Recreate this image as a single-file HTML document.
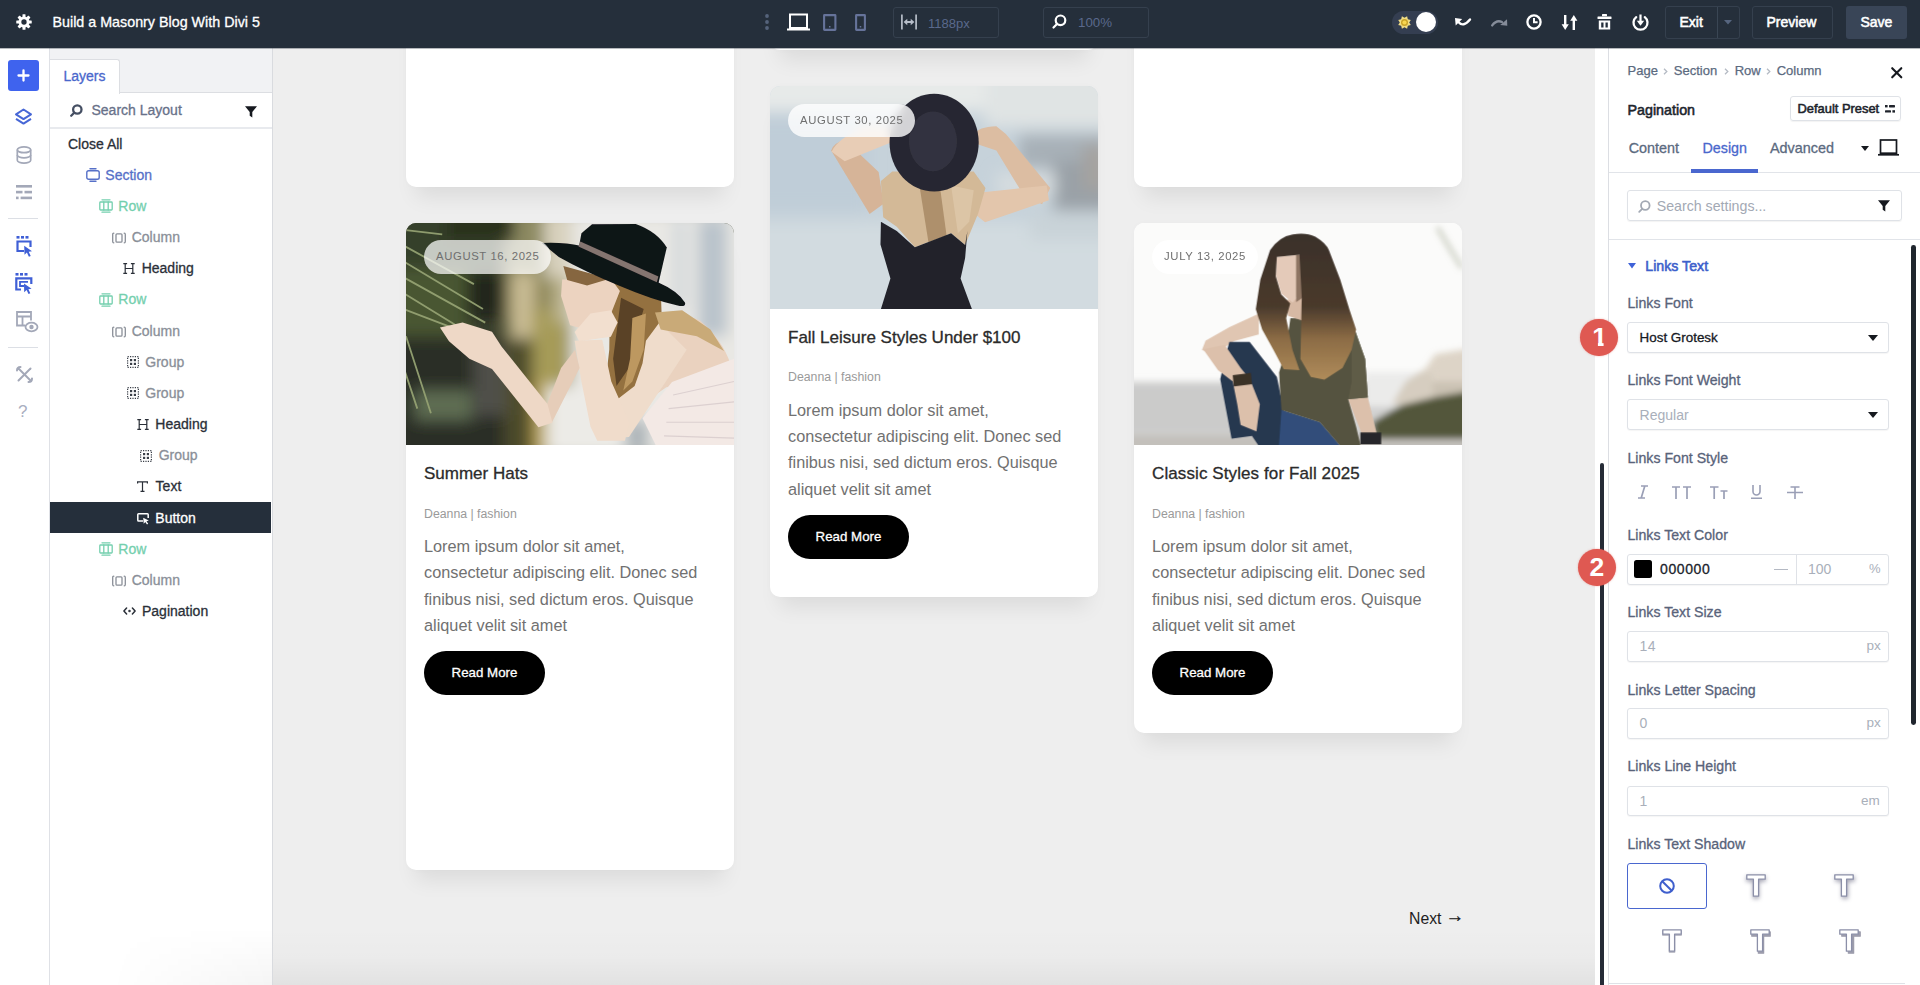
<!DOCTYPE html>
<html lang="en">
<head>
<meta charset="utf-8">
<title>Build a Masonry Blog With Divi 5</title>
<style>
*{box-sizing:border-box;margin:0;padding:0}
html,body{width:1920px;height:985px;overflow:hidden;background:#eeeeee;font-family:"Liberation Sans",sans-serif;}
body{position:relative;color:#2a2f38;font-size:14px;line-height:1}
.abs{position:absolute}
.cy{transform:translateY(-50%)}
.t{position:absolute;white-space:nowrap;line-height:1;}
.med{-webkit-text-stroke:0.3px currentColor}
.semi{-webkit-text-stroke:0.55px currentColor}
svg{position:absolute;overflow:visible}

/* ---------- top bar ---------- */
#topbar{position:absolute;left:0;top:0;width:1920px;height:48px;background:#252f3b;z-index:50}
#topbar .t{color:#fff}
.tbox{position:absolute;border:1px solid #35404e;border-radius:3px}

/* ---------- left bar ---------- */
#leftbar{position:absolute;left:0;top:48px;width:50px;height:937px;background:#fff;border-right:1px solid #dfe1e6;z-index:20}
#layers{position:absolute;left:50px;top:48px;width:223px;height:937px;background:#fff;border-right:1px solid #d9dbdf;z-index:20}
#layers .hdr{position:absolute;left:0;top:0;width:222px;height:45px;background:#f1f2f4;border-bottom:1px solid #dcdee2}
#layers .tab{position:absolute;left:0;top:10.5px;width:70px;height:35.5px;background:#fff;border:1px solid #dcdee2;border-left:none;border-bottom:none;border-radius:0 3px 0 0}
.lrow{position:absolute;left:0;width:221px;height:31px}
.lrow .t{top:8px;font-size:14px}
.c-sec{color:#5670c8}.c-row{color:#74cfae}.c-col{color:#8a8f98}.c-mod{color:#2a2f38}

/* ---------- canvas ---------- */
#canvas{position:absolute;left:273px;top:48px;width:1322px;height:937px;background:#eeeeee;overflow:hidden}
.card{position:absolute;width:328px;background:#fff;border-radius:10px;box-shadow:0 20px 20px -10px rgba(0,0,0,.08),0 0 6px rgba(0,0,0,.02);overflow:hidden}
.card .ph{position:absolute;left:0;top:0;width:328px;height:223px;overflow:hidden}
.badge{position:absolute;left:17.5px;top:17.9px;height:33.6px;border-radius:17px;background:rgba(255,255,255,.55);-webkit-backdrop-filter:blur(5px);backdrop-filter:blur(5px);color:#6f6f6f;font-size:11.3px;letter-spacing:.62px;line-height:33.6px;padding:0 12px 0 12.6px;white-space:nowrap}
.ttl{position:absolute;left:18px;font-size:17px;color:#2b2b2b;white-space:nowrap;line-height:1}
.meta{position:absolute;left:18px;font-size:12.3px;color:#9a9a9a;white-space:nowrap;line-height:1}
.body{position:absolute;left:18px;font-size:16.3px;line-height:26.4px;color:#717171;white-space:nowrap}
.btn{position:absolute;left:18px;width:121px;height:44px;border-radius:22px;background:#000;color:#fff;font-size:13.3px;text-align:center;line-height:44px}

/* ---------- right panel ---------- */
#track{position:absolute;left:1595px;top:48px;width:14px;height:937px;background:#fff;z-index:20}
#panel{position:absolute;left:1608px;top:48px;width:312px;height:937px;background:#fff;border-left:1px solid #dcdee3;z-index:21}
#panel .t{font-size:14px}
.lbl{color:#59637a}
.field{position:absolute;left:18px;width:262px;height:31px;border:1px solid #dfe2e7;border-radius:3px;background:#fff;box-shadow:0 1px 1px rgba(0,0,0,.04)}
.field .t{top:7px;font-size:13.5px}
.ph-c{color:#a9afba}
.num{position:absolute;width:37.6px;height:37.6px;border-radius:19px;background:#df5952;color:#fff;font-size:26.5px;font-weight:bold;text-align:center;line-height:37.6px;z-index:30;white-space:pre;box-shadow:0 0 2px rgba(223,89,82,.5)}
</style>
</head>
<body>
<!-- ================= TOP BAR ================= -->
<div id="topbar">
  <svg style="left:15.500px;top:14px" width="16" height="16" viewBox="0 0 18 18"><g fill="#fff"><circle cx="9" cy="9" r="6.200"/><g id="gt"><rect x="7.300" y="0.300" width="3.400" height="17.400" rx=".6"/></g><rect x="7.300" y="0.300" width="3.400" height="17.400" rx=".6" transform="rotate(45 9 9)"/><rect x="7.300" y="0.300" width="3.400" height="17.400" rx=".6" transform="rotate(90 9 9)"/><rect x="7.300" y="0.300" width="3.400" height="17.400" rx=".6" transform="rotate(135 9 9)"/></g><circle cx="9" cy="9" r="3" fill="#252f3b"/></svg>
  <div class="t med cy" style="left:52.500px;top:22.300px;font-size:14.300px">Build a Masonry Blog With Divi 5</div>

  <!-- center: dots + devices -->
  <svg style="left:765px;top:14px" width="4" height="16" viewBox="0 0 4 16" fill="#55637b"><circle cx="2" cy="2" r="1.900"/><circle cx="2" cy="8" r="1.900"/><circle cx="2" cy="14" r="1.900"/></svg>
  <svg style="left:787px;top:13px" width="23" height="18" viewBox="0 0 23 18" fill="none" stroke="#fff" stroke-width="2"><rect x="3" y="1.500" width="17" height="13.500"/><path d="M0 16.500h23" stroke-width="2"/></svg>
  <svg style="left:822.500px;top:14px" width="13.500" height="17" viewBox="0 0 13.500 17" fill="none" stroke="#66739a" stroke-width="2.100"><rect x="1.100" y="1.100" width="11.300" height="14.800" rx=".4"/><rect x="6" y="12" width="1.500" height="1.500" fill="#66739a" stroke="none"/></svg>
  <svg style="left:855px;top:14px" width="11" height="17" viewBox="0 0 11 17" fill="none" stroke="#66739a" stroke-width="2.100"><rect x="1.100" y="1.100" width="8.800" height="14.800" rx=".4"/><rect x="4.750" y="12" width="1.500" height="1.500" fill="#66739a" stroke="none"/></svg>

  <div class="tbox" style="left:893px;top:7px;width:106px;height:31px"></div>
  <svg style="left:901px;top:14px" width="16" height="16" viewBox="0 0 16 16" fill="none" stroke="#b7bec9" stroke-width="1.700"><path d="M.9 .5v15M15.100 .5v15"/><path d="M5 8h6" stroke-width="2"/><path d="M6.300 4.800L2.600 8l3.700 3.200zM9.700 4.800L13.400 8l-3.700 3.200z" fill="#b7bec9" stroke="none"/></svg>
  <div class="t cy" style="left:928px;top:22.500px;font-size:13px;color:#5a698c">1188px</div>

  <div class="tbox" style="left:1043px;top:7px;width:106px;height:31px"></div>
  <svg style="left:1052px;top:14px" width="15" height="15" viewBox="0 0 15 15" fill="none" stroke="#fff" stroke-width="2.200" stroke-linecap="round"><circle cx="8.500" cy="6.300" r="4.800"/><path d="M5 10L1.500 13.500"/></svg>
  <div class="t cy" style="left:1078px;top:22.500px;font-size:13.300px;color:#5a698c">100%</div>

  <!-- right icons -->
  <div class="abs" style="left:1392px;top:10.600px;width:46.400px;height:23px;border-radius:11.500px;background:#343e51"></div>
  <svg style="left:1397.100px;top:14.900px" width="15" height="15" viewBox="0 0 15 15"><polygon transform="rotate(22.500 7.500 7.500)" points="7.50,0.70 9.30,3.16 12.31,2.69 11.84,5.70 14.30,7.50 11.84,9.30 12.31,12.31 9.30,11.84 7.50,14.30 5.70,11.84 2.69,12.31 3.16,9.30 0.70,7.50 3.16,5.70 2.69,2.69 5.70,3.16" fill="#f0dc84"/><circle cx="7.500" cy="7.500" r="3.500" fill="#c9a227"/><circle cx="7.500" cy="7.500" r="2.100" fill="#f7d64f"/></svg>
  <div class="abs" style="left:1415.700px;top:11.900px;width:20.400px;height:20.400px;border-radius:10.200px;background:#fff"></div>

  <svg style="left:1454.500px;top:18.200px" width="16" height="8.500" viewBox="0 0 16 8.500"><path d="M0 0L7.200 1.100L.7 7.500z" fill="#fff"/><path d="M3.400 3.900Q8.300 9.800 15 1.500" fill="none" stroke="#fff" stroke-width="2.400" stroke-linecap="round"/></svg>
  <svg style="left:1490.500px;top:18.600px" width="16.500" height="8" viewBox="0 0 16.500 8"><path d="M1.200 6.400Q5.500 .6 11 3" fill="none" stroke="#858c99" stroke-width="2.400" stroke-linecap="round"/><path d="M16 .2L16.300 6.800L9.200 5.900z" fill="#858c99"/></svg>
  <svg style="left:1526px;top:14px" width="16" height="16" viewBox="0 0 16 16" fill="none" stroke="#fff" stroke-width="2.300"><circle cx="8" cy="8" r="6.600"/><path d="M8 4v4.300h3.600" stroke-width="2"/></svg>
  <svg style="left:1561px;top:14px" width="17" height="17" viewBox="0 0 17 17" fill="#fff"><rect x="3" y="1" width="2.400" height="11"/><path d="M.6 10.300h7.200L4.200 16z"/><rect x="11.600" y="5" width="2.400" height="11"/><path d="M9.200 6.700h7.200L12.800 1z"/></svg>
  <svg style="left:1597px;top:14px" width="15" height="16" viewBox="0 0 15 16" fill="#fff"><rect x="5" y="0" width="5" height="2.200" rx=".5"/><rect x=".5" y="2.600" width="14" height="2.400" rx=".5"/><path d="M1.800 6.500h11.400V15.500H1.800zM4.200 8.600v4.800h2.300V8.600zM8.500 8.600v4.800h2.300V8.600z" fill-rule="evenodd"/></svg>
  <svg style="left:1632px;top:14px" width="17" height="17" viewBox="0 0 17 17"><path d="M4.200 3.200A7 7 0 1 0 12.800 3.200" fill="none" stroke="#fff" stroke-width="2.300" stroke-linecap="round"/><rect x="7.400" y=".5" width="2.200" height="7" fill="#fff"/><path d="M4.800 6.800h7.400L8.500 11.800z" fill="#fff"/></svg>

  <div class="tbox" style="left:1665px;top:6px;width:75px;height:33px"></div>
  <div class="abs" style="left:1717px;top:7px;width:1px;height:31px;background:#3a4654"></div>
  <div class="t semi cy" style="left:1679.500px;top:22.300px;font-size:14px">Exit</div>
  <svg style="left:1724px;top:20px" width="8" height="5" viewBox="0 0 8 5"><path d="M0 0h8L4 4.500z" fill="#56657f"/></svg>
  <div class="tbox" style="left:1752px;top:6px;width:81px;height:33px"></div>
  <div class="t semi cy" style="left:1766.500px;top:22.300px;font-size:14px">Preview</div>
  <div class="abs" style="left:1846px;top:6px;width:61px;height:33px;border-radius:3px;background:#394557"></div>
  <div class="t semi cy" style="left:1860.500px;top:22.300px;font-size:14px">Save</div>
</div>
<div class="abs tb-edge" style="left:0;top:48px;width:1920px;height:1px;background:rgba(37,47,59,.33);z-index:49"></div>
<!-- ================= LEFT ICON BAR ================= -->
<div id="leftbar">
  <div class="abs" style="left:8px;top:12px;width:31px;height:31px;border-radius:3px;background:#3f63ee"></div>
  <svg style="left:17px;top:21px" width="13" height="13" viewBox="0 0 13 13"><path d="M6.500 1.500v10M1.500 6.500h10" stroke="#fff" stroke-width="2.300" stroke-linecap="round"/></svg>
  <!-- layers icon (center 23.3,117.5 abs -> y 69.5 rel) -->
  <svg style="left:14px;top:60px" width="19" height="19" viewBox="0 0 19 19" fill="none" stroke="#4767d6" stroke-width="2" stroke-linejoin="round"><path d="M9.500 1.500L17 6.300 9.500 11.100 2 6.300z"/><path d="M2 10.800l7.500 4.800 7.500-4.800"/></svg>
  <!-- database icon center y 154.7 abs -> 106.7 -->
  <svg style="left:15.500px;top:98px" width="16" height="18" viewBox="0 0 16 18" fill="none" stroke="#a3a8b8" stroke-width="1.700"><ellipse cx="8" cy="3.800" rx="6.700" ry="2.900"/><path d="M1.300 3.800v10.400c0 1.600 3 2.900 6.700 2.900s6.700-1.300 6.700-2.900V3.800"/><path d="M1.300 9c0 1.600 3 2.900 6.700 2.900s6.700-1.300 6.700-2.900"/></svg>
  <!-- lines icon center y 192 abs -> 144 -->
  <svg style="left:15.500px;top:136.500px" width="16" height="15" viewBox="0 0 16 15" fill="#a3a8b8"><rect x="0" y="0" width="16" height="2.600"/><rect x="0" y="5.800" width="6.500" height="2.600"/><rect x="8.500" y="5.800" width="7.500" height="2.600"/><rect x="0" y="11.600" width="2.600" height="2.600"/><rect x="4.600" y="11.600" width="11.400" height="2.600"/></svg>
  <div class="abs" style="left:8px;top:170px;width:30px;height:1px;background:#dcdfe5"></div>
  <!-- cursor-box 1 center y 246.3 abs -> 198.3 -->
  <svg style="left:15.500px;top:187.500px" width="17" height="22" viewBox="0 0 17 22"><g fill="#3f5fd6"><rect x=".5" y="0" width="3" height="2.600"/><rect x="5" y="0" width="3" height="2.600"/><rect x="9.500" y="0" width="3" height="2.600"/></g><path d="M8 15H1.500V5.500h13V11" fill="none" stroke="#3f5fd6" stroke-width="2.200"/><path d="M8.200 9.800l7.800 5.400-3.300.5 2 4.200-1.800.9-2-4.200-2.400 2.200z" fill="#3f5fd6"/></svg>
  <!-- cursor-box 2 center y 283.3 abs -> 235.3 -->
  <svg style="left:14.500px;top:224.500px" width="18" height="22" viewBox="0 0 18 22"><g fill="#3f5fd6"><rect x=".5" y="0" width="3" height="2.600"/><rect x="5" y="0" width="3" height="2.600"/><rect x="9.500" y="0" width="3" height="2.600"/></g><path d="M6 16.500H1.300V5.300h15V11" fill="none" stroke="#3f5fd6" stroke-width="2.200"/><path d="M9 13H5V8.800h8" fill="none" stroke="#3f5fd6" stroke-width="1.800"/><path d="M9 10.500l7.600 5.200-3.200.5 1.900 4-1.800.9-1.900-4-2.400 2.200z" fill="#3f5fd6"/></svg>
  <!-- layout-eye center y 322 abs -> 274 -->
  <svg style="left:16px;top:263px" width="23" height="22" viewBox="0 0 23 22" fill="none" stroke="#a3a8b8" stroke-width="1.800"><path d="M9 14.500H1V1h14v8.500"/><path d="M1 5.500h14M6.500 5.500v9"/><ellipse cx="15.500" cy="16" rx="6" ry="4.300" fill="#fff"/><circle cx="15.500" cy="16" r="1.300" fill="#a3a8b8"/></svg>
  <div class="abs" style="left:8px;top:298.500px;width:30px;height:1px;background:#dcdfe5"></div>
  <!-- tools center y 374.4 abs -> 326.4 -->
  <svg style="left:15.500px;top:318px" width="17" height="17" viewBox="0 0 17 17" fill="none" stroke="#a3a8b8" stroke-width="2" stroke-linecap="round"><path d="M2.500 2.500l12 12"/><path d="M14.500 2.500l-12 12"/><path d="M1 4.500Q1 1 4.500 1" /><path d="M12.500 16Q16 16 16 12.500"/></svg>
  <!-- ? center y 410.4 abs -> 362.4 -->
  <div class="t cy" style="left:18px;top:362.800px;font-size:17px;color:#a9aec0">?</div>
</div>
<!-- ================= LAYERS PANEL ================= -->
<div id="layers">
  <div class="hdr"></div>
  <div class="tab"></div>
  <div class="t med cy" style="left:13.500px;top:28.200px;font-size:14px;color:#4a67cc">Layers</div>
  <svg style="left:19.500px;top:56px" width="13" height="13" viewBox="0 0 13 13" fill="none" stroke="#454f63" stroke-width="2.300" stroke-linecap="round"><circle cx="7.300" cy="5.500" r="4.200"/><path d="M4.200 8.800L1.200 11.800"/></svg>
  <div class="t med cy" style="left:41.500px;top:62.300px;font-size:14px;color:#687189">Search Layout</div>
  <svg style="left:194.500px;top:57.500px" width="12" height="12" viewBox="0 0 12 12"><path d="M0 .3h12L7.300 6v5.500L4.700 9.800V6z" fill="#16191f"/></svg>
  <div class="abs" style="left:0;top:79px;width:222px;height:2px;background:#e8eaee"></div>
  <div class="t med cy" style="left:18px;top:95.600px;font-size:14px;color:#2a2f38">Close All</div>
<svg style="left:35.5px;top:120.0px" width="14" height="14" viewBox="0 0 14 14" fill="none" stroke="#5670c8" stroke-width="1.4" stroke-linecap="round"><path d="M4 .8h6M4 13.200h6"/><rect x=".8" y="2.800" width="12.400" height="8.400" rx="1.800"/></svg>
<div class="t med cy" style="left:55.3px;top:126.7px;color:#5670c8">Section</div>
<svg style="left:48.7px;top:151.0px" width="14" height="14" viewBox="0 0 14 14" fill="none" stroke="#74cfae" stroke-width="1.300" stroke-linecap="round"><path d="M3 .8h8M3 13.200h8M4.800 3v8M9.200 3v8"/><rect x=".8" y="3" width="12.400" height="8" rx=".8"/></svg>
<div class="t med cy" style="left:68.3px;top:157.7px;color:#74cfae">Row</div>
<svg style="left:62.0px;top:184.1px" width="14" height="12" viewBox="0 0 14 12" fill="none" stroke="#8a8f98" stroke-width="1.300" stroke-linecap="round"><path d="M1.800 1.200Q.7 1.200 .7 2.500v7Q.7 10.800 1.800 10.800M12.200 1.200Q13.300 1.200 13.300 2.500v7Q13.300 10.800 12.200 10.800"/><rect x="4" y="1.800" width="6" height="8.400" rx="1"/></svg>
<div class="t med cy" style="left:81.7px;top:189.1px;color:#8a8f98">Column</div>
<svg style="left:73.3px;top:215.1px" width="12" height="11" viewBox="0 0 12 11" fill="none" stroke="#2a2f38" stroke-width="1.200"><path d="M2.200 .6v9.800M9.800 .6v9.800M2.200 5.500h7.600M.3 .6h3.800M7.900 .6h3.800M.3 10.400h3.800M7.900 10.400h3.800"/></svg>
<div class="t med cy" style="left:91.7px;top:220.3px;color:#2a2f38">Heading</div>
<svg style="left:48.7px;top:244.6px" width="14" height="14" viewBox="0 0 14 14" fill="none" stroke="#74cfae" stroke-width="1.300" stroke-linecap="round"><path d="M3 .8h8M3 13.200h8M4.800 3v8M9.200 3v8"/><rect x=".8" y="3" width="12.400" height="8" rx=".8"/></svg>
<div class="t med cy" style="left:68.3px;top:251.3px;color:#74cfae">Row</div>
<svg style="left:62.0px;top:277.5px" width="14" height="12" viewBox="0 0 14 12" fill="none" stroke="#8a8f98" stroke-width="1.300" stroke-linecap="round"><path d="M1.800 1.200Q.7 1.200 .7 2.500v7Q.7 10.800 1.800 10.800M12.200 1.200Q13.300 1.200 13.300 2.500v7Q13.300 10.800 12.200 10.800"/><rect x="4" y="1.800" width="6" height="8.400" rx="1"/></svg>
<div class="t med cy" style="left:81.7px;top:282.5px;color:#8a8f98">Column</div>
<svg style="left:76.7px;top:308.2px" width="12" height="12" viewBox="0 0 12 12"><rect x=".6" y=".6" width="10.800" height="10.800" fill="none" stroke="#3a3f48" stroke-width="1.200" stroke-dasharray="1.200 1.200"/><rect x="3" y="3" width="2.200" height="2.200" fill="#3a3f48"/><rect x="6.800" y="3" width="2.200" height="2.200" fill="#3a3f48"/><rect x="3" y="6.800" width="2.200" height="2.200" fill="#3a3f48"/><rect x="6.800" y="6.800" width="2.200" height="2.200" fill="#3a3f48"/></svg>
<div class="t med cy" style="left:95.3px;top:313.9px;color:#8a8f98">Group</div>
<svg style="left:76.7px;top:339.3px" width="12" height="12" viewBox="0 0 12 12"><rect x=".6" y=".6" width="10.800" height="10.800" fill="none" stroke="#3a3f48" stroke-width="1.200" stroke-dasharray="1.200 1.200"/><rect x="3" y="3" width="2.200" height="2.200" fill="#3a3f48"/><rect x="6.800" y="3" width="2.200" height="2.200" fill="#3a3f48"/><rect x="3" y="6.800" width="2.200" height="2.200" fill="#3a3f48"/><rect x="6.800" y="6.800" width="2.200" height="2.200" fill="#3a3f48"/></svg>
<div class="t med cy" style="left:95.3px;top:345.0px;color:#8a8f98">Group</div>
<svg style="left:87.0px;top:371.0px" width="12" height="11" viewBox="0 0 12 11" fill="none" stroke="#2a2f38" stroke-width="1.200"><path d="M2.200 .6v9.800M9.800 .6v9.800M2.200 5.500h7.600M.3 .6h3.800M7.900 .6h3.800M.3 10.400h3.800M7.900 10.400h3.800"/></svg>
<div class="t med cy" style="left:105.3px;top:376.2px;color:#2a2f38">Heading</div>
<svg style="left:90.0px;top:401.6px" width="12" height="12" viewBox="0 0 12 12"><rect x=".6" y=".6" width="10.800" height="10.800" fill="none" stroke="#3a3f48" stroke-width="1.200" stroke-dasharray="1.200 1.200"/><rect x="3" y="3" width="2.200" height="2.200" fill="#3a3f48"/><rect x="6.800" y="3" width="2.200" height="2.200" fill="#3a3f48"/><rect x="3" y="6.800" width="2.200" height="2.200" fill="#3a3f48"/><rect x="6.800" y="6.800" width="2.200" height="2.200" fill="#3a3f48"/></svg>
<div class="t med cy" style="left:108.7px;top:407.3px;color:#8a8f98">Group</div>
<svg style="left:87.0px;top:433.1px" width="11" height="11" viewBox="0 0 11 11" fill="none" stroke="#2a2f38" stroke-width="1.200"><path d="M.6 2.600V.8h9.800v1.800M5.500 .8v9.400M3.500 10.300h4"/></svg>
<div class="t med cy" style="left:105.6px;top:438.3px;color:#2a2f38">Text</div>
<div class="abs" style="left:0;top:454.3px;width:220.500px;height:31.200px;background:#252f3b"></div>
<svg style="left:87.0px;top:464.5px" width="13" height="12" viewBox="0 0 13 12"><path d="M6 8H1.600Q.8 8 .8 7.200V1.600Q.8 .8 1.600 .8h8.800Q11.200 .8 11.200 1.600V5" fill="none" stroke="#ffffff" stroke-width="1.500"/><path d="M6.200 4.800l5.600 2.600-2.300.8 1.700 2.600-1.200.8-1.700-2.600-1.600 1.700z" fill="#ffffff"/></svg>
<div class="t med cy" style="left:105.3px;top:469.7px;color:#ffffff">Button</div>
<svg style="left:48.7px;top:494.0px" width="14" height="14" viewBox="0 0 14 14" fill="none" stroke="#74cfae" stroke-width="1.300" stroke-linecap="round"><path d="M3 .8h8M3 13.200h8M4.800 3v8M9.200 3v8"/><rect x=".8" y="3" width="12.400" height="8" rx=".8"/></svg>
<div class="t med cy" style="left:68.3px;top:500.7px;color:#74cfae">Row</div>
<svg style="left:62.0px;top:527.0px" width="14" height="12" viewBox="0 0 14 12" fill="none" stroke="#8a8f98" stroke-width="1.300" stroke-linecap="round"><path d="M1.800 1.200Q.7 1.200 .7 2.500v7Q.7 10.800 1.800 10.800M12.200 1.200Q13.300 1.200 13.300 2.500v7Q13.300 10.800 12.200 10.800"/><rect x="4" y="1.800" width="6" height="8.400" rx="1"/></svg>
<div class="t med cy" style="left:81.7px;top:532.0px;color:#8a8f98">Column</div>
<svg style="left:72.8px;top:559.4px" width="13" height="8" viewBox="0 0 13 8" fill="none" stroke="#2a2f38" stroke-width="1.500" stroke-linecap="round" stroke-linejoin="round"><path d="M3.600 1L.9 4l2.700 3M9.400 1l2.700 3-2.700 3"/><circle cx="6.500" cy="4" r=".5" fill="#2a2f38"/></svg>
<div class="t med cy" style="left:92.0px;top:563.1px;color:#2a2f38">Pagination</div>
<div class="abs bottomfade" style="left:60px;top:880px;width:162px;height:57px;background:linear-gradient(to bottom,rgba(0,0,0,0),rgba(0,0,0,.04));-webkit-mask-image:linear-gradient(to right,transparent,#000);mask-image:linear-gradient(to right,transparent,#000)"></div>
</div>
<!-- ================= CANVAS ================= -->
<div id="canvas">
  <svg width="0" height="0" style="position:absolute"><defs>
    <filter id="z6" x="-10%" y="-10%" width="120%" height="120%"><feGaussianBlur stdDeviation="3.200"/></filter>
    <filter id="z30" x="-30%" y="-30%" width="160%" height="160%"><feGaussianBlur stdDeviation="32"/></filter>
    <filter id="z14" x="-30%" y="-30%" width="160%" height="160%"><feGaussianBlur stdDeviation="14"/></filter>
  </defs></svg>

  <!-- partial cards at top -->
  <div class="card" style="left:133px;top:-100px;height:239px"></div>
  <div class="card" style="left:497px;top:-100px;height:102px"></div>
  <div class="card" style="left:861px;top:-100px;height:239px"></div>

  <!-- ===== card 1 : Summer Hats ===== -->
  <div class="card" style="left:133px;top:174.500px;height:647.500px">
    <div class="ph" style="height:222.200px">
      <svg width="328" height="223" viewBox="0 0 1449 985" preserveAspectRatio="none" style="left:0;top:0">
        <rect width="1449" height="985" fill="#3f4431"/>
        <g filter="url(#z30)">
          <rect x="-60" y="-60" width="520" height="320" fill="#36402a"/>
          <rect x="-60" y="200" width="340" height="320" fill="#4a5633"/>
          <rect x="270" y="220" width="200" height="210" fill="#22251a"/>
          <rect x="-60" y="500" width="520" height="560" fill="#2b2f26"/>
          <rect x="40" y="740" width="250" height="130" fill="#5f6d53"/>
          <rect x="300" y="560" width="150" height="290" fill="#4f504a"/>
          <rect x="440" y="-60" width="300" height="1100" fill="#8f8858"/>
          <rect x="440" y="-60" width="220" height="290" fill="#8d8a62"/>
          <rect x="180" y="-60" width="300" height="140" fill="#2a321f"/>
          <rect x="468" y="220" width="100" height="290" fill="#c9bc94"/>
          <rect x="440" y="510" width="130" height="540" fill="#4d4b2b"/>
          <rect x="560" y="380" width="150" height="330" fill="#a69b58"/>
          <rect x="560" y="700" width="90" height="340" fill="#b9a355"/>
          <rect x="610" y="-60" width="120" height="300" fill="#d8d1bd"/>
          <rect x="650" y="240" width="80" height="200" fill="#bdb591"/>
          <rect x="730" y="-60" width="800" height="1100" fill="#e9e8e4"/>
          <rect x="1290" y="-20" width="130" height="520" fill="#b9c3cb"/>
          <rect x="1180" y="-20" width="60" height="400" fill="#d3d8db"/>
          <rect x="620" y="720" width="400" height="320" fill="#ecebe7"/>
          <rect x="970" y="870" width="100" height="150" fill="#a9b1b6"/>
        </g>
        <g filter="url(#z6)" stroke="#94a172" stroke-width="8" fill="none" opacity=".95">
          <path d="M-10 30L160 50M-10 100L300 270M-10 170L340 380M-10 240L350 440M-10 310L300 500M-10 380L250 480M0 500L110 840M-10 640L50 820"/>
        </g>
        <g filter="url(#z6)">
          <!-- back / shoulder -->
          <path d="M1105 425Q1200 385 1300 432Q1400 520 1432 620L1449 700L1150 725L1000 830L985 700z" fill="#ead2bf"/>
          <!-- right upper arm (elbow up to shoulder) -->
          <path d="M905 800L1025 600L1105 425L1240 560L1145 705L985 945L900 950z" fill="#efdccb"/>
          <!-- white top -->
          <path d="M1045 862L1175 702L1449 600L1449 985L1105 985z" fill="#f3e9e5"/>
          <path d="M1180 760L1449 700M1160 820L1449 790M1150 880L1449 880M1140 940L1449 950" stroke="#dcd0d0" stroke-width="5" fill="none"/>
          <!-- hair -->
          <path d="M900 245L1000 288L1127 340L1130 425L1060 520L1045 620L1010 720L900 805L882 700L898 560L900 400z" fill="#94713f"/>
          <path d="M950 330L1050 380L1010 520L985 640L930 720L915 600z" fill="#5a4226"/>
          <path d="M1000 420L1060 400L1050 560L1000 700L960 740L990 600z" fill="#bd9861"/>
          <path d="M1100 395L1220 385L1345 470L1405 565L1285 500L1125 470z" fill="#c9aa78"/>
          <!-- face -->
          <path d="M690 250L685 322L710 402L725 452L797 472L905 402L945 300L905 246z" fill="#ecd3c0"/>
          <path d="M695 190L900 246L800 276L712 252z" fill="#86663f"/>
          <!-- hand at chin + vertical forearm -->
          <path d="M745 482L815 400L905 385L935 440L905 502L765 522z" fill="#f2dfcf"/>
          <path d="M745 520L867 516L907 700L987 880L967 962L845 962L815 900L775 700z" fill="#f0dccb"/>
          <!-- left arm: upper arm then forearm + hand -->
          <path d="M585 900L645 880L767 640L747 560L685 640z" fill="#e6cdb9"/>
          <path d="M150 462L250 440L380 480L422 545L625 800L647 882L585 902L380 645L280 600L190 522z" fill="#eed8c6"/>
          <!-- hat -->
          <path d="M775 45L822 6L1015 4Q1110 38 1152 108L1115 267L764 106z" fill="#111418"/>
          <path d="M600 88Q700 84 770 100L1115 263Q1200 300 1233 352Q1236 374 1200 364Q1090 340 945 278Q790 215 675 150z" fill="#101317"/>
          <path d="M762 104L1108 262L1115 236L770 82z" fill="#85756f"/>
        </g>
      </svg>
      <div class="badge" style="background:rgba(255,255,255,.72);-webkit-backdrop-filter:none;backdrop-filter:none">AUGUST 16, 2025</div>
    </div>
    <div class="ttl med cy" style="top:250.600px">Summer Hats</div>
    <div class="meta cy" style="top:291.400px">Deanna | fashion</div>
    <div class="body" style="top:310.500px">Lorem ipsum dolor sit amet,<br>consectetur adipiscing elit. Donec sed<br>finibus nisi, sed dictum eros. Quisque<br>aliquet velit sit amet</div>
    <div class="btn med" style="top:428.500px">Read More</div>
  </div>

  <!-- ===== card 2 : Fall Leisure ===== -->
  <div class="card" style="left:497px;top:38px;height:511px">
    <div class="ph" style="height:222.500px">
      <svg width="328" height="223" viewBox="0 0 1449 985" preserveAspectRatio="none" style="left:0;top:0">
        <rect width="1449" height="985" fill="#c6d2da"/>
        <g filter="url(#z30)">
          <rect x="-80" y="-80" width="1600" height="190" fill="#e7eae9"/>
          <rect x="-80" y="130" width="520" height="420" fill="#bfcdd8"/>
          <rect x="-80" y="600" width="1600" height="460" fill="#d2dbe0"/>
          <rect x="950" y="-80" width="600" height="260" fill="#e0e4e4"/>
          <rect x="1100" y="215" width="400" height="150" fill="#a7b0b7"/>
          <rect x="1250" y="330" width="260" height="220" fill="#9aa1a7"/>
          <rect x="1380" y="260" width="120" height="200" fill="#a5a3a0"/>
          <rect x="1000" y="380" width="260" height="110" fill="#d5dcdf"/>
          <rect x="1150" y="560" width="350" height="120" fill="#c9d3d8"/>
        </g>
        <g filter="url(#z6)">
          <!-- left arm -->
          <path d="M270 285Q280 250 330 238L480 380L502 520L440 565z" fill="#d6b498"/>
          <path d="M272 290Q300 230 420 180L545 188L545 245L330 332z" fill="#e8cdb6"/>
          <!-- right arm -->
          <path d="M900 215Q920 180 1000 178L1042 212L1238 450L1202 522L1120 482L1000 285L920 258z" fill="#dcbda2"/>
          <path d="M1222 440L1232 505L950 602L898 560L930 470z" fill="#e3c6ac"/>
          <!-- hair -->
          <path d="M490 420L540 378L900 378L952 450L920 562L862 702L800 650L640 712L560 622L500 580z" fill="#d3b997"/>
          <path d="M660 440L750 440L780 660L700 690z" fill="#ae906c"/>
          <path d="M800 440L900 460L880 600L830 650z" fill="#dcc5a6"/>
          <!-- dress -->
          <path d="M490 600L560 640L640 712L800 650L862 702L872 640L862 760L842 850L892 985L490 985L532 850L488 700z" fill="#23242c"/>
          <!-- hat -->
          <ellipse cx="725" cy="250" rx="197" ry="216" fill="#272732"/>
          <ellipse cx="720" cy="245" rx="106" ry="132" fill="#33333f"/>
        </g>
      </svg>
      <div class="badge" style="background:rgba(255,255,255,.8)">AUGUST 30, 2025</div>
    </div>
    <div class="ttl med cy" style="top:250.600px">Fall Leisure Styles Under $100</div>
    <div class="meta cy" style="top:291.400px">Deanna | fashion</div>
    <div class="body" style="top:310.500px">Lorem ipsum dolor sit amet,<br>consectetur adipiscing elit. Donec sed<br>finibus nisi, sed dictum eros. Quisque<br>aliquet velit sit amet</div>
    <div class="btn med" style="top:428.500px">Read More</div>
  </div>

  <!-- ===== card 3 : Classic Styles ===== -->
  <div class="card" style="left:861px;top:174.500px;height:510.500px">
    <div class="ph" style="height:222.200px">
      <svg width="328" height="223" viewBox="0 0 1449 985" preserveAspectRatio="none" style="left:0;top:0">
        <defs><linearGradient id="hg3" x1="0" y1="0" x2="0" y2="1"><stop offset="0" stop-color="#3a302a"/><stop offset=".5" stop-color="#4a3a2c"/><stop offset=".72" stop-color="#8c6c45"/><stop offset="1" stop-color="#b08c5a"/></linearGradient></defs>
        <rect width="1449" height="985" fill="#fbfbfa"/>
        <g filter="url(#z14)">
          <rect x="-80" y="700" width="1600" height="250" fill="#d2d2d1"/>
          <rect x="-80" y="720" width="560" height="200" fill="#cbcbca"/>
          <rect x="1020" y="660" width="300" height="150" fill="#ebebea"/>
          <rect x="-80" y="935" width="1600" height="120" fill="#c3c0bb"/>
          <path d="M1140 800L1200 700L1290 640L1330 580L1449 560L1500 560L1500 800z" fill="#c4b59c" opacity=".55"/>
          <path d="M1050 880L1180 805L1325 770L1500 740L1500 955L1060 955z" fill="#53573b"/>
          <path d="M1340 20L1400 120L1449 200" stroke="#9aa088" stroke-width="9" fill="none"/>
        </g>
        <g filter="url(#z6)">
          <!-- right forearm + watch -->
          <path d="M946 778L1033 770L1072 930L1010 942z" fill="#dcc0ab"/>
          <path d="M1000 925h92v52h-92z" fill="#26272a"/>
          <!-- left arm -->
          <path d="M551 400L421 460L316 520L300 560L351 582L441 522L551 492z" fill="#e0c6b2"/>
          
          <!-- jeans -->
          <path d="M421 525L511 525L631 680L661 830L871 985L551 985L521 940L431 952L381 690L401 600z" fill="#27374f"/>
          <path d="M651 826L821 880L911 985L640 985z" fill="#304e7a"/>
          <path d="M306 558L401 538L471 640L512 690L556 800L541 920L471 892L456 800L436 700L371 650z" fill="#dcc0ab"/>
          <path d="M436 672L516 662L521 712L441 722z" fill="#3a3028"/>
          <!-- shirt -->
          <path d="M691 420L961 430L1021 600L1033 770L946 778L981 900L1001 985L911 985L821 880L651 826L641 660L671 560z" fill="#55523f"/>
          <path d="M961 430L1021 600L1033 770L946 778L961 700z" fill="#5f5c47"/>
          <!-- neck + face -->
          <path d="M671 340L741 330L741 430L681 410z" fill="#d7b9a4"/>
          <path d="M631 150L731 140L741 300L701 352L651 312L626 230z" fill="#e4cab9"/>
          <path d="M716 140L741 140L745 330L716 350z" fill="#8e7564"/>
          <!-- hair -->
          <path d="M701 50Q760 40 801 60Q850 90 861 120L911 250L951 380L981 470L961 560L921 640L841 692L781 680L735 600L741 330L731 140L631 150L626 235L650 315L690 355L672 420L700 560L731 650L661 645L616 560L566 470L538 380L558 250L601 120Q640 60 701 50z" fill="url(#hg3)"/>
        </g>
      </svg>
      <div class="badge" style="background:rgba(255,255,255,.85)">JULY 13, 2025</div>
    </div>
    <div class="ttl med cy" style="top:250.600px;letter-spacing:.1px">Classic Styles for Fall 2025</div>
    <div class="meta cy" style="top:291.400px">Deanna | fashion</div>
    <div class="body" style="top:310.500px">Lorem ipsum dolor sit amet,<br>consectetur adipiscing elit. Donec sed<br>finibus nisi, sed dictum eros. Quisque<br>aliquet velit sit amet</div>
    <div class="btn med" style="top:428.500px">Read More</div>
  </div>

  <div class="t cy" style="left:1136px;top:869.700px;font-size:15.800px;color:#1d1d1d">Next <span style="font-size:18.500px;position:relative;top:-1.700px;left:-.5px;-webkit-text-stroke:.35px #1d1d1d">&#8594;</span></div>
  <div class="abs" style="left:0;top:880px;width:1322px;height:57px;background:linear-gradient(to bottom,rgba(0,0,0,0),rgba(0,0,0,.012) 50%,rgba(0,0,0,.05))"></div>
</div>
<!-- ================= RIGHT PANEL ================= -->
<div id="track"><div class="abs" style="left:4.500px;top:415px;width:4.800px;height:540px;border-radius:2.400px;background:#252b36"></div></div>
<div id="panel">
<div class="t cy" style="left:18.5px;top:22.4px;font-size:13px;color:#5b6a80;-webkit-text-stroke:.25px #5b6a80">Page</div>
<div class="t cy" style="left:64.8px;top:22.4px;font-size:13px;color:#5b6a80;-webkit-text-stroke:.25px #5b6a80">Section</div>
<div class="t cy" style="left:125.7px;top:22.4px;font-size:13px;color:#5b6a80;-webkit-text-stroke:.25px #5b6a80">Row</div>
<div class="t cy" style="left:167.7px;top:22.4px;font-size:13px;color:#5b6a80;-webkit-text-stroke:.25px #5b6a80">Column</div>
<svg style="left:54.3px;top:19.8px" width="5" height="7" viewBox="0 0 5 7" fill="none" stroke="#b4bac4" stroke-width="1.300"><path d="M1 .8L3.800 3.500 1 6.200"/></svg>
<svg style="left:115.2px;top:19.8px" width="5" height="7" viewBox="0 0 5 7" fill="none" stroke="#b4bac4" stroke-width="1.300"><path d="M1 .8L3.800 3.500 1 6.200"/></svg>
<svg style="left:157.2px;top:19.8px" width="5" height="7" viewBox="0 0 5 7" fill="none" stroke="#b4bac4" stroke-width="1.300"><path d="M1 .8L3.800 3.500 1 6.200"/></svg>
<svg style="left:282px;top:18.7px" width="11.500" height="11.500" viewBox="0 0 11.500 11.500" fill="none" stroke="#16191f" stroke-width="2.100" stroke-linecap="round"><path d="M1.200 1.200l9.100 9.100M10.300 1.200l-9.100 9.100"/></svg>
<div class="t semi cy" style="left:18.5px;top:61.7px;font-size:14.300px;color:#20242c">Pagination</div>
<div class="abs" style="left:180.7px;top:48.3px;width:111.600px;height:25px;border:1px solid #dfe2e7;border-radius:3px;box-shadow:0 1px 1px rgba(0,0,0,.05)"></div>
<div class="t semi cy" style="left:188.5px;top:60.9px;font-size:12.900px;color:#20242c">Default Preset</div>
<svg style="left:276px;top:57px" width="10" height="8" viewBox="0 0 10 8" fill="#20242c"><rect x="0" y="0" width="2.600" height="2.400"/><rect x="4" y="0" width="6" height="2.400" rx=".6"/><rect x="0" y="5.200" width="6" height="2.400" rx=".6"/><rect x="7.400" y="5.200" width="2.600" height="2.400"/></svg>
<div class="t med cy" style="left:19.7px;top:99.9px;font-size:14.400px;color:#5b6a80">Content</div>
<div class="t med cy" style="left:93.5px;top:99.9px;font-size:14.300px;color:#4a67cc">Design</div>
<div class="t med cy" style="left:161px;top:99.9px;font-size:14.400px;color:#5b6a80">Advanced</div>
<div class="abs" style="left:0;top:124px;width:311px;height:1px;background:#e1e4e9"></div>
<div class="abs" style="left:82px;top:121.2px;width:67px;height:3.600px;background:#4a67cf"></div>
<svg style="left:252px;top:97.5px" width="8" height="5" viewBox="0 0 8 5"><path d="M0 0h8L4 5z" fill="#16191f"/></svg>
<svg style="left:268.5px;top:91px" width="21" height="17" viewBox="0 0 21 17" fill="none" stroke="#16191f" stroke-width="1.700"><rect x="2.500" y="1" width="16" height="13.200"/><path d="M0 15.800h21"/></svg>
<div class="abs" style="left:18px;top:142.3px;width:274.500px;height:30.700px;border:1px solid #dfe2e7;border-radius:3px;box-shadow:0 1px 1px rgba(0,0,0,.05)"></div>
<svg style="left:28.8px;top:151.5px" width="13" height="13" viewBox="0 0 13 13" fill="none" stroke="#a3a9b4" stroke-width="1.800" stroke-linecap="round"><circle cx="7.300" cy="5.500" r="4.300"/><path d="M4.200 8.800L1.200 11.800"/></svg>
<div class="t cy" style="left:47.7px;top:157.8px;font-size:14.200px;color:#a3a9b4">Search settings...</div>
<svg style="left:269px;top:152px" width="12" height="12" viewBox="0 0 12 12"><path d="M0 .3h12L7.300 6v5.500L4.700 9.800V6z" fill="#16191f"/></svg>
<div class="abs" style="left:0;top:191px;width:311px;height:1px;background:#e1e4e9"></div>
<div class="abs" style="left:302px;top:197px;width:4.800px;height:480px;border-radius:2.400px;background:#20262e"></div>
<svg style="left:18.5px;top:214.5px" width="8" height="5.500" viewBox="0 0 8 5.500"><path d="M0 0h8L4 5.500z" fill="#3f62d8"/></svg>
<div class="t semi cy" style="left:36.3px;top:217.8px;font-size:14.200px;color:#3c5fcb">Links Text</div>
<div class="t med cy lbl" style="left:18.5px;top:255.4px;font-size:14.150px">Links Font</div>
<div class="t med cy lbl" style="left:18.5px;top:332.4px;font-size:14.150px">Links Font Weight</div>
<div class="t med cy lbl" style="left:18.5px;top:409.9px;font-size:14.150px">Links Font Style</div>
<div class="t med cy lbl" style="left:18.5px;top:487.0px;font-size:14.150px">Links Text Color</div>
<div class="t med cy lbl" style="left:18.5px;top:564.4px;font-size:14.150px">Links Text Size</div>
<div class="t med cy lbl" style="left:18.5px;top:642.1px;font-size:14.150px">Links Letter Spacing</div>
<div class="t med cy lbl" style="left:18.5px;top:718.4px;font-size:14.150px">Links Line Height</div>
<div class="t med cy lbl" style="left:18.5px;top:796.0px;font-size:14.150px">Links Text Shadow</div>
<div class="field" style="top:274px"><div class="t med" style="left:11.600px;top:7.600px;color:#16191f;font-size:13.400px">Host Grotesk</div><svg style="left:240px;top:12px" width="10" height="6" viewBox="0 0 10 6"><path d="M0 0h10L5 6z" fill="#16191f"/></svg></div>
<div class="field" style="top:351px"><div class="t ph-c" style="left:11.600px;top:7.600px;font-size:14px">Regular</div><svg style="left:240px;top:12px" width="10" height="6" viewBox="0 0 10 6"><path d="M0 0h10L5 6z" fill="#16191f"/></svg></div>
<svg style="left:28px;top:437.2px" width="12" height="14" viewBox="0 0 12 14" fill="none" stroke="#9a9fb6" stroke-width="1.700"><path d="M4 1h7M1 13h7M7.800 1L4.200 13"/></svg>
<svg style="left:62.5px;top:437.7px" width="19" height="13" viewBox="0 0 19 13" fill="none" stroke="#9a9fb6" stroke-width="1.700"><path d="M0 1h8M4 1v12M11 1h8M15 1v12"/></svg>
<svg style="left:101px;top:437.7px" width="18" height="13" viewBox="0 0 18 13" fill="none" stroke="#9a9fb6" stroke-width="1.700"><path d="M0 1h8.500M4.200 1v12M10.500 5h7M14 5v8"/></svg>
<svg style="left:141.5px;top:437.2px" width="11" height="14" viewBox="0 0 11 14" fill="none" stroke="#9a9fb6" stroke-width="1.600"><path d="M2 0v6.500a3.500 3.500 0 0 0 7 0V0M0 13.200h11"/></svg>
<svg style="left:177.5px;top:437.7px" width="16" height="13" viewBox="0 0 16 13" fill="none" stroke="#9a9fb6" stroke-width="1.600"><path d="M3.500 1h9M8 1v12M0 6.500h16"/></svg>
<div class="field" style="top:506.2px;height:30.500px"><div class="abs" style="left:5.800px;top:5.300px;width:18px;height:18px;border-radius:2.500px;background:#000"></div><div class="t med" style="left:32px;color:#20242c;font-size:14px;letter-spacing:.6px">000000</div><div class="abs" style="left:146px;top:14px;width:13.500px;height:1.300px;background:#b4b9c3"></div><div class="abs" style="left:167.500px;top:0;width:1px;height:28.500px;background:#dfe2e7"></div><div class="t ph-c" style="left:180px;font-size:14px;letter-spacing:0">100</div><div class="t ph-c" style="left:241px;font-size:13px">%</div></div>
<div class="field" style="top:583.3px;height:30.700px"><div class="t ph-c" style="left:11.600px;font-size:14px;letter-spacing:.4px">14</div><div class="t ph-c" style="left:238.5px;font-size:13.500px">px</div></div>
<div class="field" style="top:660.4px;height:30.700px"><div class="t ph-c" style="left:11.600px;font-size:14px;letter-spacing:.4px">0</div><div class="t ph-c" style="left:238.5px;font-size:13.500px">px</div></div>
<div class="field" style="top:737.5px;height:30.700px"><div class="t ph-c" style="left:11.600px;font-size:14px;letter-spacing:.4px">1</div><div class="t ph-c" style="left:233px;font-size:13.500px">em</div></div>
<div class="abs" style="left:18px;top:815px;width:80px;height:46px;border:1px solid #4a67cf;border-radius:3px"></div>
<svg style="left:50px;top:829.7px" width="16" height="16" viewBox="0 0 16 16" fill="none" stroke="#3f5fcd" stroke-width="2"><circle cx="8" cy="8" r="6.800"/><path d="M3.200 3.200l9.600 9.600"/></svg>
<svg style="left:137px;top:826.2px;filter:drop-shadow(0 2px 2px rgba(60,60,90,.45))" width="20" height="23" viewBox="0 0 20 23"><path d="M.8 .8h18.400v4.400h-6.600v17h-5.200v-17H.8z" fill="#fff" stroke="#8b8fa8" stroke-width="1.300" stroke-linejoin="round"/></svg>
<svg style="left:225.3px;top:826.2px;filter:drop-shadow(1.500px 2px 2px rgba(60,60,90,.45))" width="20" height="23" viewBox="0 0 20 23"><path d="M.8 .8h18.400v4.400h-6.600v17h-5.200v-17H.8z" fill="#fff" stroke="#8b8fa8" stroke-width="1.300" stroke-linejoin="round"/></svg>
<svg style="left:52.7px;top:880.5px;filter:drop-shadow(0 1.500px 0 rgba(60,60,90,.4))" width="20" height="23" viewBox="0 0 20 23"><path d="M.8 .8h18.400v4.400h-6.600v17h-5.200v-17H.8z" fill="#fff" stroke="#8b8fa8" stroke-width="1.300" stroke-linejoin="round"/></svg>
<svg style="left:141px;top:880.5px;filter:drop-shadow(1px 2.500px 0 rgba(60,60,90,.5))" width="20" height="23" viewBox="0 0 20 23"><path d="M.8 .8h18.400v4.400h-6.600v17h-5.200v-17H.8z" fill="#fff" stroke="#8b8fa8" stroke-width="1.300" stroke-linejoin="round"/></svg>
<svg style="left:230px;top:880.5px;filter:drop-shadow(2px 2.500px 0 rgba(60,60,90,.5))" width="20" height="23" viewBox="0 0 20 23"><path d="M.8 .8h18.400v4.400h-6.600v17h-5.200v-17H.8z" fill="#fff" stroke="#8b8fa8" stroke-width="1.300" stroke-linejoin="round"/></svg>
<div class="abs" style="left:0;top:934.5px;width:296px;height:1px;background:#dfe2e7"></div>
</div>
<div class="num" style="left:1580.100px;top:318.600px"><span style="position:absolute;left:.8px;top:0;width:37.600px;height:37.600px;clip-path:polygon(0 0,100% 0,100% 24.500px,22.700px 24.500px,22.700px 100%,17px 100%,17px 24.500px,0 24.500px)">1</span></div>
<div class="num" style="left:1578.200px;top:548.900px">2</div>

</body>
</html>
